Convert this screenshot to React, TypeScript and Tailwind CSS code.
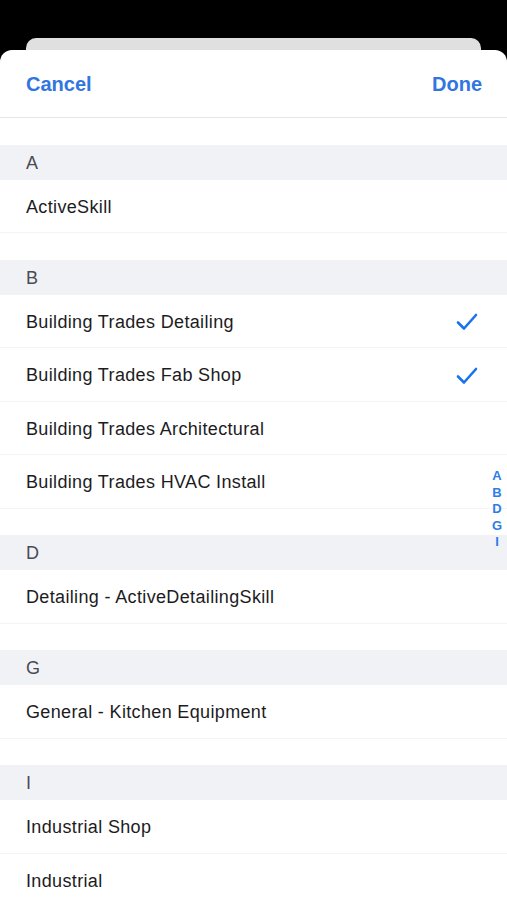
import React from 'react';

type Item = { label: string; checked?: boolean };
type Section = { letter: string; items: Item[] };

const sections: Section[] = [
  { letter: 'A', items: [{ label: 'ActiveSkill' }] },
  {
    letter: 'B',
    items: [
      { label: 'Building Trades Detailing', checked: true },
      { label: 'Building Trades Fab Shop', checked: true },
      { label: 'Building Trades Architectural' },
      { label: 'Building Trades HVAC Install' },
    ],
  },
  { letter: 'D', items: [{ label: 'Detailing - ActiveDetailingSkill' }] },
  { letter: 'G', items: [{ label: 'General - Kitchen Equipment' }] },
  { letter: 'I', items: [{ label: 'Industrial Shop' }, { label: 'Industrial' }] },
];

const Check: React.FC = () => (
  <svg width="24" height="20" viewBox="0 0 24 20" fill="none">
    <path d="M3 10.5 L9 16.5 L21 3" stroke="#1a73ee" strokeWidth="2.6" strokeLinecap="round" strokeLinejoin="round" />
  </svg>
);

const App: React.FC = () => {
  return (
    <div className="w-[507px] h-[900px] bg-black overflow-hidden flex flex-col font-['Liberation_Sans',Arial,sans-serif]">
      <div className="h-[38px] shrink-0" />
      {/* stacked card behind */}
      <div className="mx-[26px] h-[12px] shrink-0 bg-[#e0e0e0] rounded-t-[10px]" />
      <div className="flex-1 bg-white rounded-t-[12px] relative">
        <div className="h-[68px] flex items-center justify-between pl-[26px] pr-[25px] border-b border-[#e6e6e8]">
          <span className="text-[20px] font-semibold text-[#3176e0]">Cancel</span>
          <span className="text-[20px] font-semibold text-[#3176e0]">Done</span>
        </div>
        <div className="flex flex-col">
          {sections.map((s) => (
            <div key={s.letter} className="flex flex-col">
              <div className="h-[26.5px]" />
              <div className="h-[35px] bg-[#f1f2f6] flex items-center px-[26px] pt-[2px] text-[18px] font-medium text-[#4a4a55]">
                {s.letter}
              </div>
              {s.items.map((it) => (
                <div
                  key={it.label}
                  className="h-[53.5px] flex items-center justify-between pl-[26px] pr-[28px] pt-[3px] border-b border-[#f4f4f6] text-[18px] tracking-[0.35px] text-[#1c1c1e]"
                >
                  <span>{it.label}</span>
                  {it.checked && <Check />}
                </div>
              ))}
            </div>
          ))}
        </div>
        <div className="absolute right-[4px] top-[418px] flex flex-col items-center text-[13px] font-bold leading-[16.5px] text-[#2d7de8] w-[12px]">
          {['A', 'B', 'D', 'G', 'I'].map((l) => (
            <span key={l}>{l}</span>
          ))}
        </div>
      </div>
    </div>
  );
};

export default App;
